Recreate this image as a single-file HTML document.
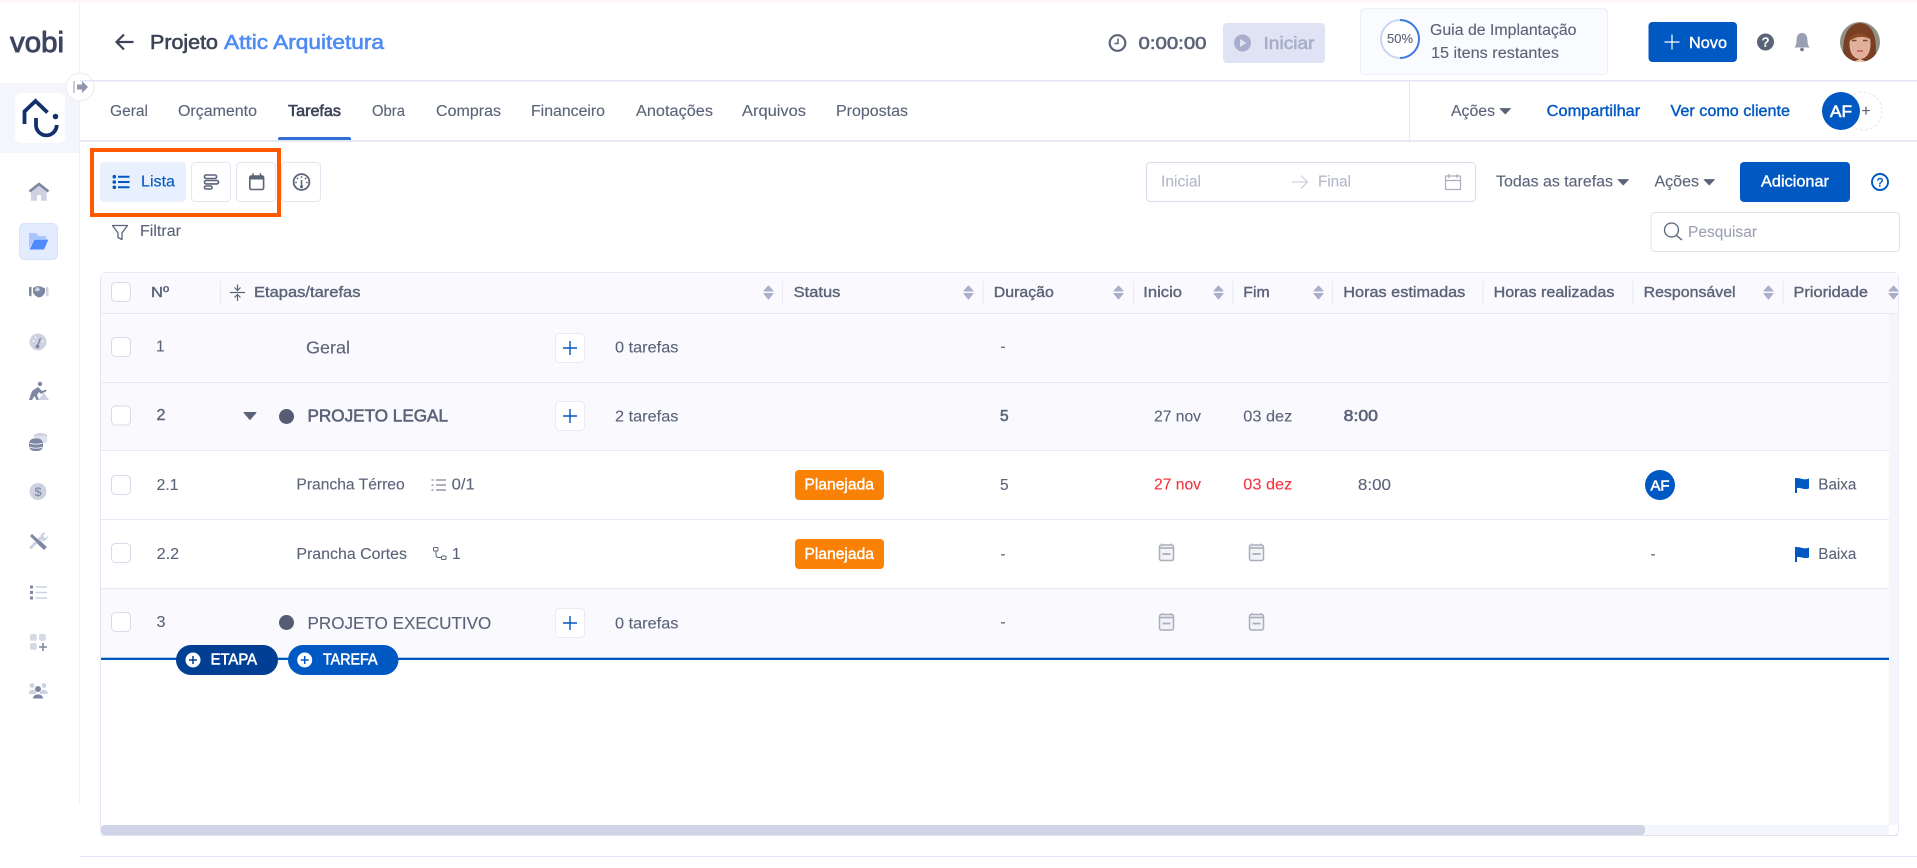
<!DOCTYPE html>
<html lang="pt-BR">
<head>
<meta charset="utf-8">
<title>Projeto Attic Arquitetura</title>
<style>
html,body{margin:0;padding:0;background:#fff;width:1917px;height:868px;overflow:hidden}
svg{display:block}
text{font-family:"Liberation Sans",sans-serif;fill:currentColor;color:#5b6379;font-size:15.5px;stroke:currentColor;stroke-width:.12px}
.m{stroke-width:.38px}
.s{stroke-width:.6px}
.d{color:#3d4458}
.b{color:#0058c2}
.w{color:#fff}
.l{color:#b3b8c8}
.r{color:#f5333f}
.h{font-size:15px}
</style>
</head>
<body>
<svg width="1917" height="868" viewBox="0 0 1917 868" xmlns="http://www.w3.org/2000/svg">
<defs>
<g id="sort"><path d="M0 5 L4.500 0 L9 5Z M0 7.500 L9 7.500 L4.500 13Z" fill="#a9aecb" stroke="#a9aecb" stroke-width="1" stroke-linejoin="round"/></g>
<g id="cb"><rect x="0.500" y="0.500" width="19" height="19" rx="4" fill="#fff" stroke="#d8dbe8"/></g>
<g id="pl"><rect x="0.500" y="0.500" width="29" height="29" rx="4" fill="#fff" stroke="#e8ebf3"/><path d="M15 8 V22 M8 15 H22" stroke="#0058c2" stroke-width="1.400" fill="none"/></g>
<g id="cal"><path d="M-4.500 -9 V-7 M4.500 -9 V-7" stroke="#a9aebc" stroke-width="1.300"/><rect x="-7" y="-7.500" width="14" height="15.500" rx="2" fill="#f2f3f7" stroke="#a9aebc" stroke-width="1.500"/><path d="M-7 -4.500 H7" stroke="#a9aebc" stroke-width="1.600"/><path d="M-4 1.500 H4" stroke="#a9aebc" stroke-width="1.800"/></g>
<g id="flag"><path d="M1 0 V15" stroke="#0058c2" stroke-width="2"/><path d="M1 .5 C5 -1 8 3 14 .5 V10.500 C8 12.500 5 8.500 1 10.500Z" fill="#0058c2"/></g>
<path id="car" d="M0 0 H10.500 L5.250 5.500Z" fill="#5b6379" stroke="#5b6379" stroke-width=".8" stroke-linejoin="round"/>
</defs>

<!-- page -->
<rect width="1917" height="868" fill="#fff"/>
<rect width="1917" height="3" fill="#fff4fb"/>

<!-- sidebar -->
<rect x="79" y="3" width="1" height="800" fill="#eef0f7"/>
<text x="10" y="52" textLength="54" lengthAdjust="spacingAndGlyphs" style="font-size:28.500px;color:#3d4560;stroke-width:.9px">vobi</text>
<rect x="0" y="83" width="79" height="70" fill="#f5f6fb"/>
<rect x="15" y="93" width="50" height="50" rx="6" fill="#fff"/>
<path d="M24.500 124 V111.500 L35.500 101 L47.500 112.500" fill="none" stroke="#12306b" stroke-width="3.800"/>
<path d="M36 118 V125 A10.350 10.350 0 0 0 56.700 125" fill="none" stroke="#12306b" stroke-width="3.800"/>
<circle cx="55.500" cy="116.500" r="2.800" fill="#12306b"/>
<circle cx="80" cy="87" r="14" fill="#fff" stroke="#e8ebf5"/>
<path d="M74 81 V93" stroke="#9097ae" stroke-width="1"/>
<path d="M77 84.500 H82 V81 L88 87 L82 93 V89.500 H77Z" fill="#8f96ad"/>

<path d="M31 200.700 V190 L39 184.500 L46.700 190 V200.700 H41 V195 H37 V200.700Z" fill="#cdd1e0"/>
<path d="M29.500 191.500 L39 184 L48.500 191.500" fill="none" stroke="#7d86a3" stroke-width="2.600"/>
<rect x="19.500" y="223.500" width="38" height="36" rx="5" fill="#e3ecff" stroke="#d6e3ff"/>
<path d="M29 233 H36 L38.500 236 H46 V239 H34.500 L29 248Z" fill="#a9c6ff"/>
<path d="M34.500 239.500 H48.500 L44 249.500 H29.500Z" fill="#4f8bff"/>
<!-- handshake -->
<path d="M29 287.500 L31.500 286.500 V296.500 L29 295.500Z" fill="#7d86a3"/>
<path d="M46 286.500 L48.500 287.500 V295.500 L46 296.500Z" fill="#cdd1e0"/>
<path d="M33 288 L37 286 L41 286.500 L45 288.500 V292.500 L43.500 295 L41 297 L38.500 297.500 L35 295.500 L33 292.500Z" fill="#7d86a3"/>
<path d="M37 286.500 L34.500 290.500 L38 291.500 L40.500 289.500" fill="#cdd1e0"/>
<!-- gauge -->
<circle cx="38" cy="342" r="8.500" fill="#cdd1e0"/>
<path d="M37.500 346 L40.500 338" stroke="#7d86a3" stroke-width="1.400"/><circle cx="37.500" cy="346.500" r="1.900" fill="#7d86a3"/>
<circle cx="33.500" cy="341" r=".9" fill="#fff"/><circle cx="35.500" cy="337.500" r=".9" fill="#fff"/><circle cx="43" cy="341.500" r=".9" fill="#fff"/>
<!-- worker -->
<circle cx="40" cy="384" r="2.200" fill="#7d86a3"/>
<path d="M29 400 L32 391 L38 387 L42 391 L46 389.500 L46.500 391 L41 394 L39 392 L37 395 L39 400 H36.500 L34.500 396 L32 400Z" fill="#7d86a3"/>
<path d="M38 400 L44 392.500 L49 400Z" fill="#cdd1e0"/>
<!-- coins -->
<ellipse cx="40.500" cy="436" rx="6.800" ry="3" fill="#cdd1e0"/><rect x="33.700" y="436" width="13.600" height="7" rx="3" fill="#dfe2ec"/>
<rect x="29" y="438.500" width="14" height="12.500" rx="5" fill="#7d86a3"/>
<path d="M29.500 443 C32 444.500 40 444.500 42.500 443 M29.500 447 C32 448.500 40 448.500 42.500 447" fill="none" stroke="#fff" stroke-width=".8"/>
<!-- dollar -->
<circle cx="38" cy="491.500" r="8.500" fill="#cdd1e0"/>
<text x="34.500" y="496" textLength="7" lengthAdjust="spacingAndGlyphs" style="font-size:12px;color:#7d86a3">$</text>
<!-- tools -->
<path d="M30 548.500 L41 537.500" stroke="#cdd1e0" stroke-width="3"/>
<path d="M40.500 538 A4.500 4.500 0 0 1 45.500 532.500 L43 536 L45.500 538.500 L47.800 535.500 A5 5 0 0 1 42 541Z" fill="#cdd1e0"/>
<path d="M31 535 L38.500 542" stroke="#7d86a3" stroke-width="3"/>
<path d="M38.500 542 L45.500 548.500" stroke="#7d86a3" stroke-width="4.200"/>
<!-- list -->
<path d="M30 585.500 h3 v3 h-3z M30 591 h3 v3 h-3z M30 596.500 h3 v3 h-3z" fill="#7d86a3"/>
<path d="M35.500 587 H47 M35.500 592.500 H47 M35.500 598 H47" stroke="#cdd1e0" stroke-width="1.600"/>
<!-- apps -->
<rect x="30" y="634" width="6.800" height="6.800" rx="2" fill="#d5d8e5"/><rect x="39" y="634" width="6.800" height="6.800" rx="2" fill="#d5d8e5"/><rect x="30" y="643" width="6.800" height="6.800" rx="2" fill="#d5d8e5"/>
<path d="M39 647 H47 M43 643 V651" stroke="#7d86a3" stroke-width="1.600"/>
<!-- team -->
<circle cx="32" cy="685.500" r="2.400" fill="#cdd1e0"/><circle cx="44" cy="685.500" r="2.400" fill="#cdd1e0"/>
<path d="M29 692 C30 689 35 689 36 692 V694 H29Z M40 692 C41 689 46 689 47.500 692 V694 H40Z" fill="#cdd1e0"/>
<circle cx="38" cy="689" r="3" fill="#7d86a3"/>
<path d="M33 698.500 C33 693 43 693 43 698.500Z" fill="#7d86a3"/>

<!-- top header -->
<path d="M133.500 42 H116.500 M124 34.500 L116.500 42 L124 49.500" fill="none" stroke="#3d4458" stroke-width="2.200"/>
<text x="150" y="49" textLength="68" lengthAdjust="spacingAndGlyphs" class="s d" style="font-size:20px">Projeto</text>
<text x="224" y="49" textLength="160" lengthAdjust="spacingAndGlyphs" class="s" style="font-size:20px;color:#4f8bf5">Attic Arquitetura</text>

<circle cx="1117.500" cy="43" r="7.800" fill="none" stroke="#5b6379" stroke-width="2.200"/>
<path d="M1118 38.500 V43.500 H1114.500" fill="none" stroke="#5b6379" stroke-width="1.500"/>
<text x="1138.500" y="49" textLength="68" lengthAdjust="spacingAndGlyphs" class="s" style="font-size:17.500px">0:00:00</text>
<rect x="1223" y="23" width="102" height="40" rx="4" fill="#dfe3f3"/>
<circle cx="1242.500" cy="43" r="8.500" fill="#a8aece"/>
<path d="M1240 39 L1246.500 43 L1240 47Z" fill="#dfe3f3"/>
<text x="1263.500" y="49" textLength="51" lengthAdjust="spacingAndGlyphs" class="s" style="font-size:17.500px;color:#a8aecb">Iniciar</text>

<rect x="1360.500" y="8.500" width="247" height="66" rx="4" fill="#fafbfe" stroke="#eef0f8"/>
<circle cx="1400" cy="39" r="19" fill="#fff" stroke="#c7d6f5" stroke-width="2"/>
<path d="M1400 20 A19 19 0 0 1 1400 58" fill="none" stroke="#3d7be0" stroke-width="2"/>
<text x="1387" y="43" textLength="26" lengthAdjust="spacingAndGlyphs" style="font-size:13px">50%</text>
<text x="1430" y="35" textLength="146.500" lengthAdjust="spacingAndGlyphs">Guia de Implantação</text>
<text x="1431" y="58" textLength="128" lengthAdjust="spacingAndGlyphs">15 itens restantes</text>

<rect x="1648.500" y="22" width="88.500" height="40" rx="4" fill="#0058c2"/>
<path d="M1672 34.500 V49.500 M1664.500 42 H1679.500" stroke="#fff" stroke-width="1.200"/>
<text x="1689" y="48" textLength="38" lengthAdjust="spacingAndGlyphs" class="m w">Novo</text>
<circle cx="1765.500" cy="42" r="8.500" fill="#5b6379"/>
<text x="1762" y="46.500" textLength="7" lengthAdjust="spacingAndGlyphs" class="s w" style="font-size:12.500px">?</text>
<path d="M1802 33 C1797.500 33 1796.500 37 1796.500 41 C1796.500 44 1795.500 46 1794.500 47.500 H1809.500 C1808.500 46 1807.500 44 1807.500 41 C1807.500 37 1806.500 33 1802 33Z" fill="#9aa0b4"/>
<circle cx="1802" cy="49.500" r="1.800" fill="#6e7488"/>

<!-- avatar -->
<clipPath id="ava"><circle cx="1860" cy="42" r="20"/></clipPath>
<g clip-path="url(#ava)">
<rect x="1840" y="22" width="40" height="40" fill="#8f8f84"/>
<path d="M1844 62 C1841 40 1846 24 1860 23 C1874 24 1878 40 1875 62Z" fill="#7a3f22"/>
<path d="M1850 38 C1856 36 1864 35 1870 38 C1872 50 1868 59 1860 59 C1852 59 1848 50 1850 38Z" fill="#e0b09a"/>
<path d="M1848.500 42 C1851 32 1862 29 1871.500 40 C1866 36 1856 35 1848.500 42Z" fill="#8a4a28"/>
<path d="M1852 40.500 h4.500 M1863 40.500 h4.500" stroke="#6b4a3c" stroke-width="1.400"/>
<path d="M1857 51 h6" stroke="#c4625c" stroke-width="1.700"/>
<path d="M1853 62 L1860 59 L1867 62Z" fill="#f0d0bd"/>
</g>

<rect x="80" y="80" width="1837" height="1.500" fill="#e3e7f5"/>

<!-- tabs -->
<text x="110" y="116" textLength="38" lengthAdjust="spacingAndGlyphs">Geral</text>
<text x="178" y="116" textLength="79" lengthAdjust="spacingAndGlyphs">Orçamento</text>
<text x="288" y="116" textLength="53" lengthAdjust="spacingAndGlyphs" class="s d">Tarefas</text>
<text x="372" y="116" textLength="33" lengthAdjust="spacingAndGlyphs">Obra</text>
<text x="436" y="116" textLength="65" lengthAdjust="spacingAndGlyphs">Compras</text>
<text x="531" y="116" textLength="74" lengthAdjust="spacingAndGlyphs">Financeiro</text>
<text x="636" y="116" textLength="77" lengthAdjust="spacingAndGlyphs">Anotações</text>
<text x="742" y="116" textLength="64" lengthAdjust="spacingAndGlyphs">Arquivos</text>
<text x="836" y="116" textLength="72" lengthAdjust="spacingAndGlyphs">Propostas</text>
<rect x="80" y="140" width="1837" height="2" fill="#e6e9f5"/>
<path d="M278 140 V139 A2 2 0 0 1 280 137 H349 A2 2 0 0 1 351 139 V140Z" fill="#2f6fd6"/>

<rect x="1409" y="81" width="1" height="59" fill="#e3e7f5"/>
<text x="1451" y="116" textLength="44" lengthAdjust="spacingAndGlyphs">Ações</text>
<use href="#car" x="1500" y="108.500"/>
<text x="1546.700" y="116" textLength="93.500" lengthAdjust="spacingAndGlyphs" class="m b">Compartilhar</text>
<text x="1670.500" y="116" textLength="119.500" lengthAdjust="spacingAndGlyphs" class="m b">Ver como cliente</text>
<circle cx="1863" cy="111" r="19" fill="#fff" stroke="#dfe3ee" stroke-dasharray="2.500 2.500"/>
<text x="1861.500" y="116" textLength="9" lengthAdjust="spacingAndGlyphs">+</text>
<circle cx="1841" cy="111" r="19" fill="#0058c2"/>
<text x="1830" y="117" textLength="22" lengthAdjust="spacingAndGlyphs" class="s w" style="font-size:17px">AF</text>

<!-- toolbar -->
<rect x="100" y="162" width="86" height="40" rx="4" fill="#e9f0fd"/>
<circle cx="114.300" cy="176.700" r="1.800" fill="#0058c2"/><circle cx="114.300" cy="182" r="1.800" fill="#0058c2"/><circle cx="114.300" cy="187.300" r="1.800" fill="#0058c2"/>
<path d="M118 176.700 H129.500 M118 182 H129.500 M118 187.300 H129.500" stroke="#0058c2" stroke-width="2"/>
<text x="141" y="186.500" textLength="34" lengthAdjust="spacingAndGlyphs" class="b">Lista</text>
<rect x="191.500" y="162.500" width="39" height="39" rx="4" fill="#fff" stroke="#e3e6f0"/>
<rect x="204.500" y="175" width="12" height="3.500" rx="1.500" fill="none" stroke="#5b6379" stroke-width="1.600"/>
<rect x="204.500" y="180.500" width="14" height="3.400" rx="1.500" fill="none" stroke="#5b6379" stroke-width="1.600"/>
<rect x="204.500" y="186" width="7.500" height="3" rx="1.300" fill="none" stroke="#5b6379" stroke-width="1.600"/>
<rect x="236.500" y="162.500" width="39" height="39" rx="4" fill="#fff" stroke="#e3e6f0"/>
<rect x="249.800" y="176" width="13.800" height="13.500" rx="1.500" fill="none" stroke="#5b6379" stroke-width="1.600"/>
<rect x="249.800" y="176" width="13.800" height="3.500" fill="#5b6379"/>
<path d="M253 173.300 V176 M260.500 173.300 V176" stroke="#5b6379" stroke-width="1.500"/>
<rect x="281.500" y="162.500" width="39" height="39" rx="4" fill="#fff" stroke="#e3e6f0"/>
<circle cx="301.500" cy="182" r="7.900" fill="none" stroke="#5b6379" stroke-width="1.800"/>
<path d="M301.500 180 V186.500" stroke="#5b6379" stroke-width="1.500"/><circle cx="301.500" cy="186.800" r="1.500" fill="#5b6379"/>
<circle cx="301.500" cy="177" r=".9" fill="#5b6379"/><circle cx="297.500" cy="178.500" r=".9" fill="#5b6379"/><circle cx="305.500" cy="178.500" r=".9" fill="#5b6379"/><circle cx="296" cy="182.500" r=".9" fill="#5b6379"/><circle cx="307" cy="182.500" r=".9" fill="#5b6379"/>
<rect x="92" y="150" width="187" height="65" fill="none" stroke="#ff5a00" stroke-width="4"/>

<path d="M112.500 225.500 H127.500 L122 233 V239.500 L118 237.500 V233Z" fill="none" stroke="#5b6379" stroke-width="1.300" stroke-linejoin="round"/>
<text x="140" y="236" textLength="41" lengthAdjust="spacingAndGlyphs">Filtrar</text>

<rect x="1146.500" y="162.500" width="329" height="39" rx="4" fill="#fff" stroke="#d6dbe9"/>
<text x="1161" y="186.500" textLength="40" lengthAdjust="spacingAndGlyphs" class="l">Inicial</text>
<path d="M1292 182 H1307.500 M1301 175.500 L1307.500 182 L1301 188.500" fill="none" stroke="#c4c8d4" stroke-width="1"/>
<text x="1318" y="186.500" textLength="33" lengthAdjust="spacingAndGlyphs" class="l">Final</text>
<rect x="1445.500" y="176" width="15" height="13.500" fill="none" stroke="#a9aebc" stroke-width="1.200"/>
<path d="M1445.500 180.500 H1460.500 M1449 174 V178 M1457 174 V178" stroke="#a9aebc" stroke-width="1.200"/>
<text x="1496" y="186.500" textLength="117" lengthAdjust="spacingAndGlyphs">Todas as tarefas</text>
<use href="#car" x="1618" y="179.500"/>
<text x="1654.500" y="186.500" textLength="44.500" lengthAdjust="spacingAndGlyphs">Ações</text>
<use href="#car" x="1704" y="179.500"/>
<rect x="1740" y="162" width="110" height="40" rx="4" fill="#0058c2"/>
<text x="1761" y="186.500" textLength="68" lengthAdjust="spacingAndGlyphs" class="m w">Adicionar</text>
<circle cx="1880" cy="182" r="8" fill="none" stroke="#0058c2" stroke-width="1.900"/>
<text x="1876.700" y="186.500" textLength="6.500" lengthAdjust="spacingAndGlyphs" class="m b" style="font-size:12px">?</text>
<rect x="1651" y="212.500" width="248.500" height="39" rx="4" fill="#fff" stroke="#dfe3ee"/>
<circle cx="1671.500" cy="230" r="7" fill="none" stroke="#5b6379" stroke-width="1.300"/>
<path d="M1676.500 235.500 L1682 240" stroke="#5b6379" stroke-width="1.400"/>
<text x="1688" y="237" textLength="69" lengthAdjust="spacingAndGlyphs" style="color:#9ea3b4">Pesquisar</text>

<!-- table -->
<rect x="100.500" y="272.500" width="1798" height="563" rx="5" fill="#fff" stroke="#e6e9f5"/>
<rect x="101" y="273" width="1797" height="40" fill="#fafafe"/>
<rect x="101" y="314" width="1788" height="137" fill="#fafafe"/>
<rect x="101" y="589" width="1788" height="69" fill="#fafafe"/>
<rect x="1889" y="314" width="9.500" height="511" fill="#f5f6fc"/>
<rect x="101" y="313" width="1797" height="1" fill="#e6e9f5"/>
<rect x="101" y="382" width="1788" height="1" fill="#e6e9f5"/>
<rect x="101" y="450" width="1788" height="1" fill="#e6e9f5"/>
<rect x="101" y="519" width="1788" height="1" fill="#e6e9f5"/>
<rect x="101" y="588" width="1788" height="1" fill="#e6e9f5"/>

<!-- head -->
<use href="#cb" x="111" y="282"/>
<text x="151" y="297" textLength="18" lengthAdjust="spacingAndGlyphs" class="m h">Nº</text>
<path d="M220.500 281 V305 M782.500 281 V305 M983 281 V305 M1133.500 281 V305 M1233 281 V305 M1332.500 281 V305 M1483 281 V305 M1633 281 V305 M1783 281 V305" stroke="#eaecf4" stroke-width="1.300"/>
<path d="M230 292.500 H245 M237.500 284.500 V290 M234.500 287.500 L237.500 290.500 L240.500 287.500 M237.500 301 V295 M234.500 297.500 L237.500 294.500 L240.500 297.500" fill="none" stroke="#5b6379" stroke-width="1.200"/>
<text x="254" y="297" textLength="106.500" lengthAdjust="spacingAndGlyphs" class="m h">Etapas/tarefas</text>
<text x="793.700" y="297" textLength="46.700" lengthAdjust="spacingAndGlyphs" class="m h">Status</text>
<text x="993.800" y="297" textLength="60" lengthAdjust="spacingAndGlyphs" class="m h">Duração</text>
<text x="1143.300" y="297" textLength="38.700" lengthAdjust="spacingAndGlyphs" class="m h">Inicio</text>
<text x="1243.300" y="297" textLength="26.400" lengthAdjust="spacingAndGlyphs" class="m h">Fim</text>
<text x="1343.300" y="297" textLength="122" lengthAdjust="spacingAndGlyphs" class="m h">Horas estimadas</text>
<text x="1493.600" y="297" textLength="120.800" lengthAdjust="spacingAndGlyphs" class="m h">Horas realizadas</text>
<text x="1643.600" y="297" textLength="92" lengthAdjust="spacingAndGlyphs" class="m h">Responsável</text>
<text x="1793.500" y="297" textLength="74.500" lengthAdjust="spacingAndGlyphs" class="m h">Prioridade</text>
<use href="#sort" x="764" y="286"/><use href="#sort" x="964" y="286"/><use href="#sort" x="1114" y="286"/><use href="#sort" x="1214" y="286"/><use href="#sort" x="1314" y="286"/><use href="#sort" x="1764" y="286"/><use href="#sort" x="1889" y="286"/>

<!-- row 1 -->
<use href="#cb" x="111" y="337"/>
<text x="156" y="351.700">1</text>
<text x="306" y="353.500" textLength="44" lengthAdjust="spacingAndGlyphs" style="font-size:17.500px">Geral</text>
<use href="#pl" x="555" y="333"/>
<text x="615" y="352.500" textLength="63.400" lengthAdjust="spacingAndGlyphs">0 tarefas</text>
<text x="1000.500" y="351.500" textLength="5" lengthAdjust="spacingAndGlyphs">-</text>

<!-- row 2 -->
<use href="#cb" x="111" y="405.500"/>
<text x="156.500" y="420" textLength="9" lengthAdjust="spacingAndGlyphs" class="m">2</text>
<path d="M244 412.500 H256 L250 419.500Z" fill="#5b6379" stroke="#5b6379" stroke-linejoin="round"/>
<circle cx="286.500" cy="416.500" r="7.500" fill="#555d75"/>
<text x="307.500" y="421.500" textLength="140.500" lengthAdjust="spacingAndGlyphs" class="s" style="font-size:17.500px">PROJETO LEGAL</text>
<use href="#pl" x="555" y="401"/>
<text x="615" y="421.500" textLength="63.400" lengthAdjust="spacingAndGlyphs">2 tarefas</text>
<text x="1000" y="421" textLength="8.600" lengthAdjust="spacingAndGlyphs" class="s">5</text>
<text x="1154" y="421.500" textLength="47" lengthAdjust="spacingAndGlyphs">27 nov</text>
<text x="1243.300" y="421.500" textLength="49" lengthAdjust="spacingAndGlyphs">03 dez</text>
<text x="1343.700" y="421" textLength="34.300" lengthAdjust="spacingAndGlyphs" class="s">8:00</text>

<!-- row 3 -->
<use href="#cb" x="111" y="475"/>
<text x="156.700" y="490" textLength="21.800" lengthAdjust="spacingAndGlyphs">2.1</text>
<text x="296.400" y="489.500" textLength="108.300" lengthAdjust="spacingAndGlyphs">Prancha Térreo</text>
<path d="M436 480 H446 M436 485 H446 M436 490 H446 M431.500 480 h2 M431.500 485 h2 M431.500 490 h2" stroke="#5b6379" stroke-width="1"/>
<text x="451.700" y="489.500" textLength="23.100" lengthAdjust="spacingAndGlyphs">0/1</text>
<rect x="795" y="470" width="89" height="30" rx="4" fill="#f98106"/>
<text x="804.400" y="489.500" textLength="69.600" lengthAdjust="spacingAndGlyphs" class="m w">Planejada</text>
<text x="1000" y="490" textLength="8.600" lengthAdjust="spacingAndGlyphs">5</text>
<text x="1154" y="489.500" textLength="47" lengthAdjust="spacingAndGlyphs" class="r">27 nov</text>
<text x="1243.300" y="489.500" textLength="49" lengthAdjust="spacingAndGlyphs" class="r">03 dez</text>
<text x="1357.900" y="490" textLength="33.100" lengthAdjust="spacingAndGlyphs">8:00</text>
<circle cx="1660" cy="485" r="15" fill="#0058c2"/>
<text x="1650.500" y="490.500" textLength="19" lengthAdjust="spacingAndGlyphs" class="s w" style="font-size:15px">AF</text>
<use href="#flag" x="1795" y="478"/>
<text x="1818.300" y="489.500" textLength="38.100" lengthAdjust="spacingAndGlyphs">Baixa</text>

<!-- row 4 -->
<use href="#cb" x="111" y="543"/>
<text x="156.700" y="559" textLength="22.500" lengthAdjust="spacingAndGlyphs">2.2</text>
<text x="296.400" y="559" textLength="110.600" lengthAdjust="spacingAndGlyphs">Prancha Cortes</text>
<rect x="433.500" y="547.500" width="4.500" height="3.500" rx="1" fill="none" stroke="#5b6379"/>
<rect x="441.500" y="556" width="4.500" height="3.500" rx="1" fill="none" stroke="#5b6379"/>
<path d="M436 551 V555 Q436 557.500 439 557.500 H441.500" fill="none" stroke="#5b6379"/>
<text x="452" y="559">1</text>
<rect x="795" y="539" width="89" height="30" rx="4" fill="#f98106"/>
<text x="804.400" y="559" textLength="69.600" lengthAdjust="spacingAndGlyphs" class="m w">Planejada</text>
<text x="1000.500" y="559" textLength="5" lengthAdjust="spacingAndGlyphs">-</text>
<use href="#cal" x="1166.500" y="552.500"/><use href="#cal" x="1256.500" y="552.500"/>
<text x="1650.500" y="559" textLength="5" lengthAdjust="spacingAndGlyphs">-</text>
<use href="#flag" x="1795" y="547"/>
<text x="1818.300" y="559" textLength="38.100" lengthAdjust="spacingAndGlyphs">Baixa</text>

<!-- row 5 -->
<use href="#cb" x="111" y="612"/>
<text x="156.500" y="627" textLength="9" lengthAdjust="spacingAndGlyphs">3</text>
<circle cx="286.500" cy="622.500" r="7.500" fill="#555d75"/>
<text x="307.500" y="629" textLength="183.800" lengthAdjust="spacingAndGlyphs" style="font-size:17.500px">PROJETO EXECUTIVO</text>
<use href="#pl" x="555" y="608"/>
<text x="615" y="628.300" textLength="63.400" lengthAdjust="spacingAndGlyphs">0 tarefas</text>
<text x="1000.500" y="627" textLength="5" lengthAdjust="spacingAndGlyphs">-</text>
<use href="#cal" x="1166.500" y="622"/><use href="#cal" x="1256.500" y="622"/>

<!-- add line -->
<rect x="101" y="657.700" width="1788" height="2.300" fill="#0058c2"/>
<rect x="176" y="645" width="102" height="30" rx="15" fill="#003f94"/>
<circle cx="193" cy="660" r="7.500" fill="#fff"/>
<path d="M193 656 V664 M189 660 H197" stroke="#003f94" stroke-width="1.500"/>
<text x="210.600" y="664.500" textLength="46.400" lengthAdjust="spacingAndGlyphs" class="s w">ETAPA</text>
<rect x="288" y="645" width="110.500" height="30" rx="15" fill="#0058c2"/>
<circle cx="304.700" cy="660" r="7.500" fill="#fff"/>
<path d="M304.700 656 V664 M300.700 660 H308.700" stroke="#0058c2" stroke-width="1.500"/>
<text x="323" y="664.500" textLength="54.500" lengthAdjust="spacingAndGlyphs" class="s w">TAREFA</text>

<!-- scrollbar -->
<rect x="101" y="825" width="1788" height="10" fill="#f5f6fc"/>
<rect x="101" y="825" width="1544" height="10" rx="4" fill="#cfd4e6"/>
<rect x="101" y="835" width="1797" height="1" fill="#dfe3f3"/>

<rect x="80" y="856" width="1837" height="1" fill="#e3e7f5"/>
</svg>
</body>
</html>
